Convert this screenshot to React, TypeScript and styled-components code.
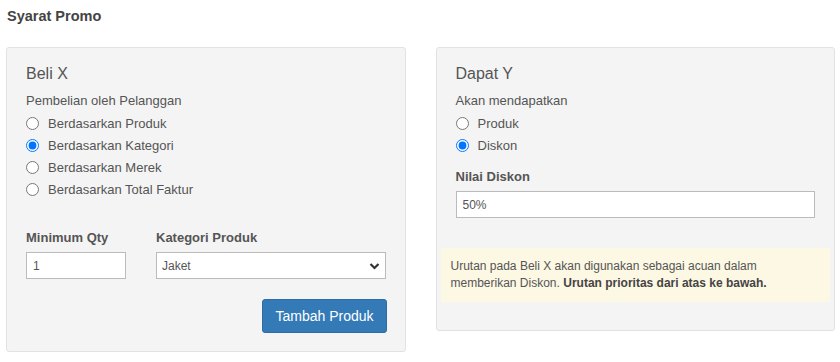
import styled, { createGlobalStyle } from "styled-components";

const GlobalStyle = createGlobalStyle`
    body {
        margin: 0;
        background: #fff;
        font-family: "Liberation Sans", Arial, sans-serif;
        color: #555;
    }
`
const Page = styled.div`
    padding: 6px 5px 10px 6px;
`
const PageTitle = styled.div`
    font-size: 14.5px;
    font-weight: bold;
    line-height: 20px;
    color: #444;
    padding-left: 1px;
    margin-bottom: 21px;
`
const Columns = styled.div`
    display: flex;
    align-items: flex-start;
    gap: 30px;
`
const Panel = styled.div<{ $bottom: number }>`
    flex: 1;
    background-color: #f4f4f4;
    border: 1px solid #e2e2e2;
    border-radius: 3px;
    padding: 16px 19px ${(p) => p.$bottom}px 19px;
`
const PanelTitle = styled.div`
    font-size: 16px;
    line-height: 20px;
    color: #555;
`
const Question = styled.div`
    font-size: 13px;
    line-height: 20px;
    margin-top: 7px;
`
const Options = styled.div`
    margin-top: 1px;
    display: flex;
    flex-direction: column;
`
const Option = styled.label`
    display: flex;
    align-items: center;
    gap: 9px;
    height: 22px;
    font-size: 13px;
    cursor: pointer;

    input {
        margin: 0;
        width: 13px;
        height: 13px;
    }
`
const Fields = styled.div`
    display: grid;
    grid-template-columns: 100px 1fr;
    column-gap: 30px;
    margin-top: 28px;
`
const Field = styled.div`
    display: flex;
    flex-direction: column;
`
const Label = styled.div<{ $top?: number }>`
    font-size: 13px;
    font-weight: bold;
    line-height: 20px;
    margin-top: ${(p) => p.$top || 0}px;
    margin-bottom: 4px;
`
const TextInput = styled.input`
    box-sizing: border-box;
    width: 100%;
    height: 27px;
    border: 1px solid #bbb;
    background: #fff;
    padding: 0 6px;
    font-family: "Liberation Sans", Arial, sans-serif;
    font-size: 12px;
    color: #555;
    outline: none;
`
const SelectWrap = styled.div`
    position: relative;

    svg {
        position: absolute;
        right: 6px;
        top: 10px;
        pointer-events: none;
    }
`
const Select = styled.select`
    box-sizing: border-box;
    width: 100%;
    height: 27px;
    border: 1px solid #bbb;
    border-radius: 0;
    background: #fff;
    padding: 0 24px 0 5px;
    font-family: "Liberation Sans", Arial, sans-serif;
    font-size: 12px;
    color: #555;
    appearance: none;
    outline: none;
`
const Actions = styled.div`
    display: flex;
    justify-content: flex-end;
    margin-top: 20px;
`
const Button = styled.button`
    background-color: #337ab7;
    border: 1px solid #2e6da4;
    border-radius: 3px;
    color: #fff;
    font-family: "Liberation Sans", Arial, sans-serif;
    font-size: 14px;
    height: 34px;
    padding: 0 12px;
    margin-right: -1px;
    cursor: pointer;
`
const Note = styled.div`
    margin: 30px -15px 0 -15px;
    background-color: #fcf8e3;
    padding: 10px 10px;
    font-size: 12px;
    line-height: 17px;
    color: #555;

    b {
        color: #444;
    }
`

function Chevron() {
    return (
        <svg width="11" height="8" viewBox="0 0 11 8">
            <path d="M1.5 2 L5.5 6 L9.5 2" fill="none" stroke="#333" strokeWidth="2.2" />
        </svg>
    );
}

function App() {
    return (
        <Page>
            <GlobalStyle />
            <PageTitle>Syarat Promo</PageTitle>
            <Columns>
                <Panel $bottom={18}>
                    <PanelTitle>Beli X</PanelTitle>
                    <Question>Pembelian oleh Pelanggan</Question>
                    <Options>
                        <Option><input type="radio" name="beli" />Berdasarkan Produk</Option>
                        <Option><input type="radio" name="beli" defaultChecked />Berdasarkan Kategori</Option>
                        <Option><input type="radio" name="beli" />Berdasarkan Merek</Option>
                        <Option><input type="radio" name="beli" />Berdasarkan Total Faktur</Option>
                    </Options>
                    <Fields>
                        <Field>
                            <Label>Minimum Qty</Label>
                            <TextInput defaultValue="1" />
                        </Field>
                        <Field>
                            <Label>Kategori Produk</Label>
                            <SelectWrap>
                                <Select defaultValue="Jaket">
                                    <option>Jaket</option>
                                    <option>Kaos</option>
                                    <option>Celana</option>
                                </Select>
                                <Chevron />
                            </SelectWrap>
                        </Field>
                    </Fields>
                    <Actions>
                        <Button>Tambah Produk</Button>
                    </Actions>
                </Panel>
                <Panel $bottom={28}>
                    <PanelTitle>Dapat Y</PanelTitle>
                    <Question>Akan mendapatkan</Question>
                    <Options>
                        <Option><input type="radio" name="dapat" />Produk</Option>
                        <Option><input type="radio" name="dapat" defaultChecked />Diskon</Option>
                    </Options>
                    <Label $top={11}>Nilai Diskon</Label>
                    <TextInput defaultValue="50%" />
                    <Note>
                        Urutan pada Beli X akan digunakan sebagai acuan dalam memberikan Diskon.{" "}
                        <b>Urutan prioritas dari atas ke bawah.</b>
                    </Note>
                </Panel>
            </Columns>
        </Page>
    );
}

export default App;
